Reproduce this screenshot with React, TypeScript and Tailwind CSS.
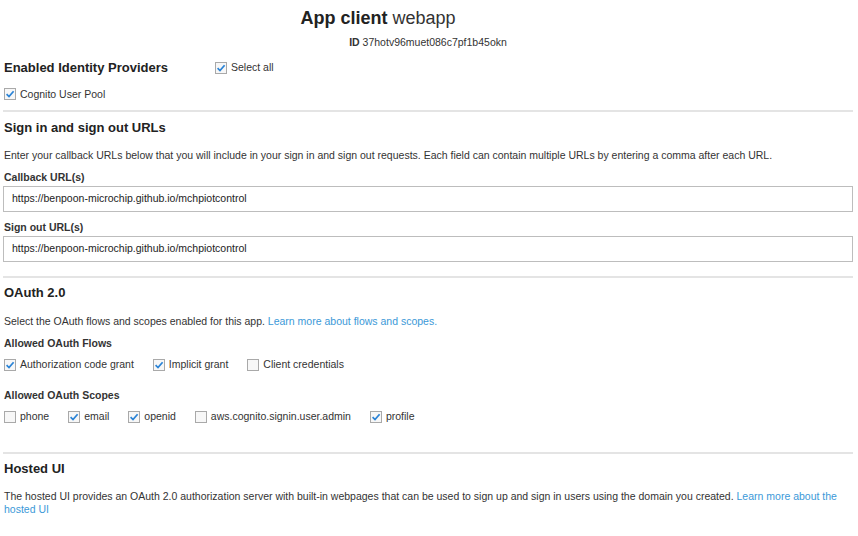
import React from "react";

function Box({ checked }: { checked: boolean }) {
  return (
    <span className="inline-flex h-[12px] w-[12px] shrink-0 items-center justify-center border border-[#a9a9a9] bg-[#f7f7f7]">
      {checked && (
        <svg width="10" height="10" viewBox="0 0 10 10">
          <path d="M1.6 5.2 L4 7.6 L8.6 2.2" fill="none" stroke="#2a83d6" strokeWidth="1.7" />
        </svg>
      )}
    </span>
  );
}

function Check({ checked, label }: { checked: boolean; label: string }) {
  return (
    <span className="inline-flex items-center gap-[4px]">
      <Box checked={checked} />
      <span>{label}</span>
    </span>
  );
}

function Sep() {
  return <div className="h-[2px] bg-[#e4e4e4]" />;
}

export default function App() {
  return (
    <div
      className="min-h-[536px] w-[858px] bg-white pl-[3px] pr-[5px] text-[10.5px] text-[#333]"
      style={{ fontFamily: '"Liberation Sans", Arial, sans-serif' }}
    >
      <div className="flex flex-col items-center pt-[7px]">
        <div className="pr-[100px] text-[18px] leading-[22px] text-[#222]">
          <span className="font-bold">App client</span> <span className="text-[#333]">webapp</span>
        </div>
        <div className="mt-[7px] leading-[13px]">
          <span className="font-bold">ID</span> 37hotv96muet086c7pf1b45okn
        </div>
      </div>

      <div className="mt-[9px] flex items-center pl-[1px]">
        <div className="w-[211px] text-[13px] font-bold leading-[16px] text-[#222]">Enabled Identity Providers</div>
        <div className="mt-[2px]">
          <Check checked label="Select all" />
        </div>
      </div>
      <div className="mt-[10px] pl-[1px] leading-[13px]">
        <Check checked label="Cognito User Pool" />
      </div>

      <div className="mt-[8px]">
        <Sep />
      </div>

      <div className="mt-[8px] pl-[1px] text-[13px] font-bold leading-[16px] text-[#222]">Sign in and sign out URLs</div>
      <div className="mt-[13px] pl-[1px] leading-[13px]">
        Enter your callback URLs below that you will include in your sign in and sign out requests. Each field can contain multiple URLs by entering a comma after each URL.
      </div>
      <div className="mt-[9px] pl-[1px] font-bold leading-[13px]">Callback URL(s)</div>
      <div className="mt-[2px] flex h-[26px] items-center border border-[#bdbdbd] px-[8px] text-[#222]">
        https://benpoon-microchip.github.io/mchpiotcontrol
      </div>
      <div className="mt-[9px] pl-[1px] font-bold leading-[13px]">Sign out URL(s)</div>
      <div className="mt-[2px] flex h-[26px] items-center border border-[#bdbdbd] px-[8px] text-[#222]">
        https://benpoon-microchip.github.io/mchpiotcontrol
      </div>

      <div className="mt-[14px]">
        <Sep />
      </div>

      <div className="mt-[7px] pl-[1px] text-[13px] font-bold leading-[16px] text-[#222]">OAuth 2.0</div>
      <div className="mt-[14px] pl-[1px] leading-[13px]">
        Select the OAuth flows and scopes enabled for this app.{" "}
        <span className="text-[#3b99d8]">Learn more about flows and scopes.</span>
      </div>
      <div className="mt-[9px] pl-[1px] font-bold leading-[13px]">Allowed OAuth Flows</div>
      <div className="mt-[8px] flex items-center gap-[19px] pl-[1px] leading-[13px]">
        <Check checked label="Authorization code grant" />
        <Check checked label="Implicit grant" />
        <Check checked={false} label="Client credentials" />
      </div>
      <div className="mt-[18px] pl-[1px] font-bold leading-[13px]">Allowed OAuth Scopes</div>
      <div className="mt-[8px] flex items-center gap-[19px] pl-[1px] leading-[13px]">
        <Check checked={false} label="phone" />
        <Check checked label="email" />
        <Check checked label="openid" />
        <Check checked={false} label="aws.cognito.signin.user.admin" />
        <Check checked label="profile" />
      </div>

      <div className="mt-[29px]">
        <Sep />
      </div>

      <div className="mt-[7px] pl-[1px] text-[13px] font-bold leading-[16px] text-[#222]">Hosted UI</div>
      <div className="mt-[13px] pl-[1px] pr-[8px] leading-[13px]">
        The hosted UI provides an OAuth 2.0 authorization server with built-in webpages that can be used to sign up and sign in users using the domain you created.{" "}
        <span className="text-[#3b99d8]">Learn more about the</span>{" "}
        <span className="text-[#3b99d8]">hosted UI</span>
      </div>
    </div>
  );
}
